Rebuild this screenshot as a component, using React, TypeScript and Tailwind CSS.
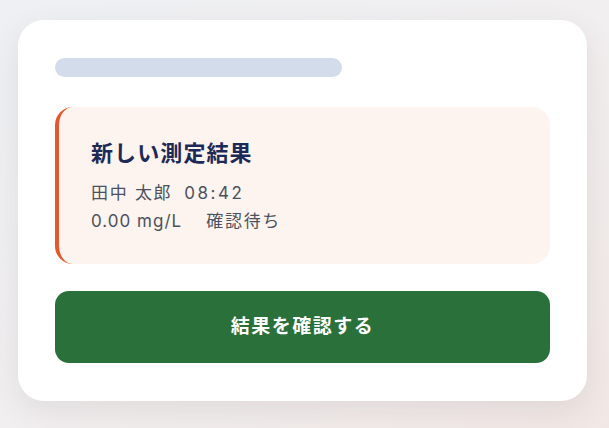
import React from "react";

const font = { fontFamily: '"Inter", "Noto Sans CJK JP", sans-serif' };

const ResultNotice: React.FC = () => {
  return (
    <div className="rounded-[18px] border-l-4 border-[#e5572a] bg-[#fdf4f0] pt-[31px] pb-[29px] pl-[32px] pr-6">
      <h2 className="text-[22px] leading-[30px] font-bold tracking-[0.05em] text-[#1d2a57]">新しい測定結果</h2>
      <div className="mt-[11px] text-[17px] leading-[28px] text-[#4b515e]">
        <p className="flex items-baseline">
          <span className="tracking-[0.1em]">田中 太郎</span>
          <span className="ml-[12px] tracking-[0.15em]">08:42</span>
        </p>
        <p className="flex items-baseline">
          <span className="tracking-[0.06em]">0.00 mg/L</span>
          <span className="ml-[24px] tracking-[0.1em]">確認待ち</span>
        </p>
      </div>
    </div>
  );
};

export default function App() {
  return (
    <div
      className="w-[609px] h-[428px] bg-gradient-to-br from-[#eef0f3] via-[#f1eff0] to-[#f1e8e5] pt-[20px] pl-[18px]"
      style={font}
    >
      <div className="w-[569px] h-[381px] rounded-[26px] bg-white px-[37px] pt-[38px] shadow-[0_10px_30px_rgba(80,60,60,0.10)] flex flex-col">
        <div className="h-[19px] w-[287px] rounded-full bg-[#d3dcea]" />
        <div className="mt-[30px]">
          <ResultNotice />
        </div>
        <button className="mt-[27px] h-[72px] w-full rounded-[14px] bg-[#29703a] text-[19px] font-bold tracking-[0.08em] text-white">
          結果を確認する
        </button>
      </div>
    </div>
  );
}
